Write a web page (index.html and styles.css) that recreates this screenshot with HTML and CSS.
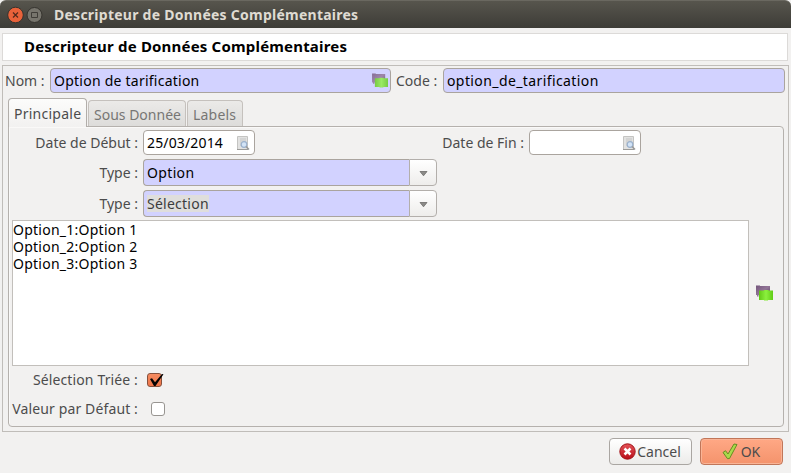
FILE: index.html
```html
<!DOCTYPE html>
<html lang="fr">
<head>
<meta charset="utf-8">
<title>Descripteur de Données Complémentaires</title>
<link rel="stylesheet" href="styles.css">
</head>
<body>
<svg class="defs" width="0" height="0" aria-hidden="true">
  <defs>
    <linearGradient id="green" x1="0" x2="1"><stop offset="0" stop-color="#62c916"/><stop offset=".5" stop-color="#8cf03e"/><stop offset="1" stop-color="#60cc16"/></linearGradient>
    <linearGradient id="purple" x1="0" x2="1" y2="1"><stop offset="0" stop-color="#74557b"/><stop offset=".5" stop-color="#927596"/><stop offset="1" stop-color="#553a5c"/></linearGradient>
    <linearGradient id="red" x2="0" y2="1"><stop offset="0" stop-color="#e45358"/><stop offset="1" stop-color="#b80d19"/></linearGradient>
    <symbol id="translate" viewBox="0 0 18 16">
      <path d="M0 .5h4V1h10v9H2.500v1.500H1V10H0z" fill="url(#purple)"/>
      <path d="M3 5.500h5V5h4.500v.5H17v9.500h-5v.5H8V15H3z" fill="url(#green)"/>
    </symbol>
    <symbol id="lookup" viewBox="0 0 14 16">
      <path d="M1.500 1.500h10v13h-10z" fill="#e2e2e1" stroke="#c4c4c2"/>
      <path d="M4 4h6M4 6h6M4 8h3M4 10h2" stroke="#c5c6c6"/>
      <path d="M1 14.500h11" stroke="#9c9c9a"/>
      <circle cx="8" cy="9.500" r="2.800" fill="#d3e4f7" stroke="#9ab1cd" stroke-width="1.200"/>
      <path d="m10 11.500 3 3" stroke="#999" stroke-width="1.600"/>
    </symbol>
  </defs>
</svg>

<header class="titlebar">
  <svg class="controls" width="36" height="18" viewBox="0 0 36 18">
    <circle cx="8.500" cy="9" r="7.800" fill="#e9623a" stroke="#35332e"/>
    <path d="m6 6.500 5 5m0-5-5 5" stroke="#52291c" stroke-width="1.200"/>
    <circle cx="27.500" cy="9" r="7.500" fill="#77756d" stroke="#35332e"/>
    <path d="M24.500 6.500h6v5h-6z" fill="none" stroke="#3f3d38"/>
  </svg>
  <span class="window-title">Descripteur de Données Complémentaires</span>
</header>

<h1 class="heading"><span>Descripteur de Données Complémentaires</span></h1>

<main class="form">
  <div class="identity">
    <label class="nom">Nom :</label>
    <div class="entry required name"><span class="t-name">Option de tarification</span><svg class="pale" width="17" height="15"><use href="#translate"/></svg></div>
    <label class="code">Code :</label>
    <div class="entry required grow"><span class="t-code">option_de_tarification</span></div>
  </div>

  <nav class="tabs">
    <div class="tab active"><span class="t-main">Principale</span></div>
    <div class="tab"><span class="t-sub">Sous Donnée</span></div>
    <div class="tab"><span class="t-labels">Labels</span></div>
  </nav>

  <section class="panel">
    <div class="row dates">
      <label><span class="t-start">Date de Début :</span></label>
      <div class="entry date"><span class="t-date">25/03/2014</span><svg width="14" height="16"><use href="#lookup"/></svg></div>
      <label class="end"><span class="t-end">Date de Fin :</span></label>
      <div class="entry date"><span></span><svg width="14" height="16"><use href="#lookup"/></svg></div>
    </div>
    <div class="row combo-row">
      <label><span class="t-type">Type :</span></label>
      <div class="combo"><span class="value"><span class="t-option">Option</span></span><span class="arrow"><svg width="9" height="6"><path d="M1 .5h7L4.500 4.800z" fill="#8c8b88" stroke="#6d6c69" stroke-width=".8"/></svg></span></div>
    </div>
    <div class="row combo-row">
      <label><span class="t-type">Type :</span></label>
      <div class="combo"><span class="value"><span class="t-select">Sélection</span></span><span class="arrow"><svg width="9" height="6"><path d="M1 .5h7L4.500 4.800z" fill="#8c8b88" stroke="#6d6c69" stroke-width=".8"/></svg></span></div>
    </div>
    <div class="options">
      <div class="textarea"><div>Option_1:Option 1</div><div>Option_2:Option 2</div><div>Option_3:Option 3</div></div>
      <svg width="18" height="16"><use href="#translate"/></svg>
    </div>
    <div class="row check-row">
      <label><span class="t-sorted">Sélection Triée :</span></label>
      <span class="check checked"><svg width="18" height="15" viewBox="0 0 18 15"><path d="m3 6 2-.7 3 4L15 1l1.500.3L8.500 13H7z" fill="#050302"/></svg></span>
    </div>
    <div class="row check-row last">
      <label><span class="t-default">Valeur par Défaut :</span></label>
      <span class="check"></span>
    </div>
  </section>
</main>

<footer class="actions">
  <button class="cancel"><svg width="17" height="17" viewBox="0 0 17 17"><circle cx="8.500" cy="8.500" r="7.700" fill="url(#red)" stroke="#a11319"/><path d="m5.500 5.500 6 6m0-6-6 6" stroke="#fff" stroke-width="2.500"/></svg><span>Cancel</span></button>
  <button class="ok"><svg width="16" height="17" viewBox="0 0 16 17"><path d="m1 9.500 2.500-1.800L6 11 12 1l3 .5L7.500 15.500l-2 .2z" fill="#a9d94b" stroke="#658d20"/></svg><span>OK</span></button>
</footer>
</body>
</html>
```
FILE: styles.css
```css
* { box-sizing: border-box; }
body {
  margin: 0;
  width: 791px;
  height: 473px;
  overflow: hidden;
  background: #f2f1f0;
  color: #4c4c4c;
  font: 14px/17px "Noto Sans", sans-serif;
  white-space: nowrap;
}
.defs { position: absolute; }
svg { display: block; flex: none; }

.titlebar {
  display: flex;
  align-items: center;
  height: 28px;
  padding: 0 7px;
  border-top: 1px solid #6a6860;
  border-radius: 6px 6px 0 0;
  background: linear-gradient(#57554d, #3d3c37);
}
.window-title {
  margin-left: 11px;
  padding-bottom: 1px;
  color: #dfdbd2;
  font-weight: 700;
  letter-spacing: .25px;
}
.heading {
  display: flex;
  align-items: center;
  height: 28px;
  margin: 5px 3px 4px 2px;
  padding: 0 0 1px 21px;
  border: 1px solid #dcdad8;
  background: #fff;
  color: #000;
  font-size: 15px;
  letter-spacing: .19px;
}

.form {
  height: 367px;
  margin: 0 2px;
  padding: 2px 3px 0 5px;
  border: 1px solid #c0bdb9;
}
.identity { display: flex; align-items: flex-start; height: 26px; margin-left: -3px; }
.nom, .code { padding-top: 4px; }
.nom { width: 45px; }
.code { width: 47px; margin-left: 5px; }
.entry {
  display: flex;
  align-items: center;
  justify-content: space-between;
  height: 25px;
  padding: 0 4px 0 3px;
  border: 1px solid #aaa49e;
  border-radius: 4px;
  background: #fff;
  color: #000;
}
.required { background: #d2d2ff; }
.name { width: 341px; padding-right: 1px; }
.name svg { margin-bottom: 1px; }
.grow { flex: 1; }
.pale { opacity: .8; }

.tabs { display: flex; align-items: flex-end; gap: 1px; height: 32px; }
.tab {
  display: flex;
  align-items: center;
  height: 26px;
  padding: 1px 5px 0;
  border: 1px solid #c5c1bd;
  border-bottom: 0;
  border-radius: 4px 4px 0 0;
  background: linear-gradient(#ebeae8, #dddcda);
  color: #777674;
}
.tab:nth-child(2) { width: 98px; }
.tab:nth-child(3) { width: 56px; }
.tab.active {
  position: relative;
  width: 79px;
  height: 29px;
  margin-bottom: -1px;
  padding-top: 0;
  border-color: #b2aeaa;
  background: linear-gradient(#fcfcfb, #f2f1f0);
  color: #4c4c4c;
}
.panel {
  height: 301px;
  width: 776px;
  padding: 3px;
  border: 1px solid #b5b1ad;
  border-radius: 0 4px 4px 4px;
  box-shadow: inset 1px 1px #faf9f8;
}
.row { display: flex; align-items: center; }
.row > label { display: flex; justify-content: flex-end; width: 126px; margin-right: 5px; }
.row > label.end { width: 269px; }
.dates { height: 25px; margin-bottom: 4px; }
.date { width: 112px; }
.combo-row { height: 27px; margin-bottom: 4px; }
.combo { display: flex; width: 294px; height: 27px; }
.value {
  display: flex;
  align-items: center;
  width: 266px;
  padding-left: 3px;
  border: 1px solid #aaa49e;
  border-right: 0;
  border-radius: 4px 0 0 4px;
  background: #d2d2ff;
  color: #000;
}
.arrow {
  display: flex;
  align-items: center;
  justify-content: center;
  flex: 1;
  padding-top: 2px;
  border: 1px solid #b3afab;
  border-radius: 0 4px 4px 0;
  background: linear-gradient(#fff, #eeedeb);
}
.t-name { letter-spacing: .24px; }
.t-code { letter-spacing: .4px; }
.t-main { letter-spacing: .25px; }
.t-labels { letter-spacing: .2px; }
.t-date { letter-spacing: .15px; }
.t-option { letter-spacing: .35px; }
.t-select { background: #dfdedc; color: #3c3c3c; letter-spacing: .25px; }
.t-sorted, .t-default { letter-spacing: .13px; }
.options { display: flex; align-items: center; gap: 7px; margin-top: -1px; }
.textarea {
  width: 737px;
  height: 146px;
  border: 1px solid #c2bfbb;
  background: #fff;
  color: #000;
  letter-spacing: .25px;
}
.check-row { height: 29px; margin-top: -1px; }
.check-row.last { margin-top: 0; }
.check {
  width: 14px;
  height: 14px;
  margin-left: 8px;
  border: 1px solid #989591;
  border-radius: 3px;
  background: #fff;
}
.checked { margin-left: 4px; width: 15px; border-color: #87503c; background: linear-gradient(#f58b60, #ee7548); }
.checked svg { margin: -1px; }

.actions { display: flex; justify-content: flex-end; gap: 8px; padding: 6px 8px 0 0; }
button {
  display: flex;
  align-items: center;
  justify-content: center;
  width: 83px;
  height: 27px;
  padding: 0;
  border: 1px solid #aaa6a2;
  border-radius: 4px;
  background: linear-gradient(#fff, #ecebe9);
  color: #4c4c4c;
  font: inherit;
}
.cancel svg { margin-right: 1px; }
.cancel span { margin-right: 1px; }
.ok { border-color: #c17659; background: linear-gradient(#ffa885, #f4936c); box-shadow: inset 0 0 0 1px #f9b496; }
.ok svg { margin: 0 3px 0 0; }
.ok span { margin-right: 1px; }
```
